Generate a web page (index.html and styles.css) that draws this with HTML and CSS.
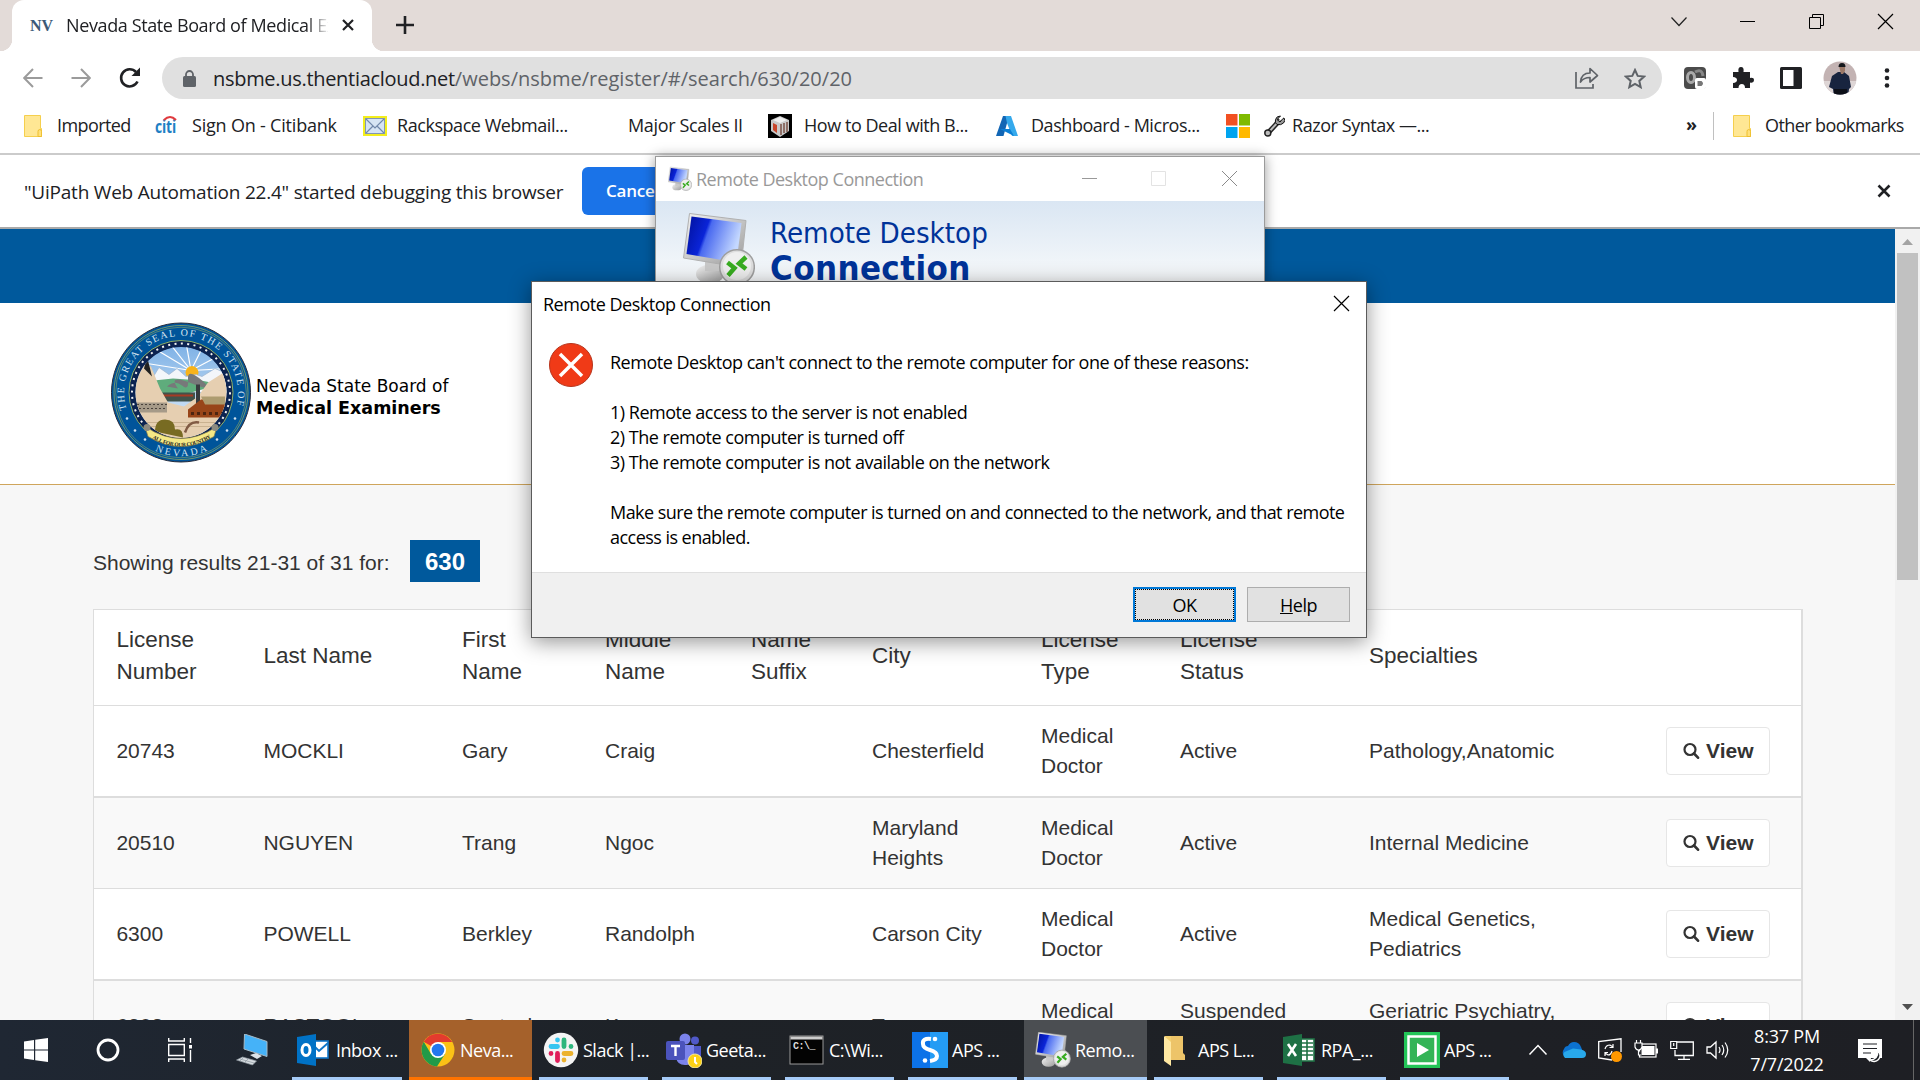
FILE: index.html
```html
<!DOCTYPE html>
<html lang="en">
<head>
<meta charset="utf-8">
<title>Nevada State Board of Medical Examiners</title>
<link rel="stylesheet" href="styles.css">
</head>
<body>
<svg class="defs" width="0" height="0">
  <defs>
    <linearGradient id="screen" x1="0" y1="0" x2="1" y2=".3"><stop offset="0" stop-color="#00109a"/><stop offset=".4" stop-color="#0a24d8"/><stop offset=".46" stop-color="#4a6af0"/><stop offset="1" stop-color="#c4d8ff"/></linearGradient>
    <linearGradient id="metal" x1="0" y1="0" x2="1" y2="1"><stop offset="0" stop-color="#f4f4f4"/><stop offset="1" stop-color="#9a9a9a"/></linearGradient>
    <linearGradient id="sky" x1="0" y1="0" x2="0" y2="1"><stop offset="0" stop-color="#7fb2e6"/><stop offset="1" stop-color="#e8f2fa"/></linearGradient>
  </defs>
  <symbol id="folder" viewBox="0 0 18 22"><path d="M0.5 0.5h16v13h1v8h-17z" fill="#ffe794" stroke="#f5cf4d"/><path d="M14 21.500v-5q0-2 1.800-2t1.800 2v5z" fill="#ffe07a" stroke="#eebf2f"/></symbol>
  <symbol id="rdp" viewBox="0 0 72 73"><ellipse cx="27" cy="61" rx="14" ry="9.500" fill="url(#metal)"/><path d="M22 46h17v12H22z" fill="#c9c9c9"/><path d="M6.500 .5L63 7.500 58 54.500.5 45z" fill="url(#metal)" stroke="#b0b0b0"/><path d="M8.500 3.500l50 6.500-5 39.500L3.500 41z" fill="url(#screen)"/><circle cx="54" cy="54" r="17.300" fill="#dedede" stroke="#9f9f9f" stroke-width="1.500"/><circle cx="54" cy="53" r="14" fill="#efefef"/><path d="M44.500 49.500l7 5.500-6.500 7.500M63 44l-7 6.500 7 5.500" fill="none" stroke="#38ac20" stroke-width="4.500"/></symbol>
  <symbol id="loupe" viewBox="0 0 17 17"><circle cx="7" cy="7.500" r="5.500" fill="none" stroke="#333" stroke-width="2.200"/><path d="M11 11.500l4 4.200" stroke="#333" stroke-width="2.600" stroke-linecap="round"/></symbol>
</svg>

<div class="desktop">
  <section class="browser">
    <header class="tabstrip">
      <div class="tab">
        <span class="nv">NV</span>
        <span class="tab-title">Nevada State Board of Medical Ex</span>
        <svg class="tab-close" width="14" height="14" viewBox="0 0 14 14"><path d="M2 2l10 10M12 2L2 12" stroke="#202124" stroke-width="2.200"/></svg>
      </div>
      <svg class="new-tab" width="20" height="20" viewBox="0 0 20 20"><path d="M10 1v18M1 10h18" stroke="#202124" stroke-width="2.600"/></svg>
      <div class="win-controls">
        <svg width="70" height="42" viewBox="0 0 70 42"><path d="M28.500 17.500l7.500 8 7.500-8" fill="none" stroke="#222" stroke-width="1.200"/></svg>
        <svg width="69" height="42" viewBox="0 0 69 42"><path d="M27 21.500h15" stroke="#000"/></svg>
        <svg width="69" height="42" viewBox="0 0 69 42"><path d="M27.500 17.500h11v11h-11zM30.500 17.500v-3h11v11h-3" fill="none" stroke="#000"/></svg>
        <svg width="69" height="42" viewBox="0 0 69 42"><path d="M27 14l15 15M42 14L27 29" stroke="#000" stroke-width="1.200"/></svg>
      </div>
    </header>

    <div class="toolbar">
      <svg class="nav" width="20" height="20" viewBox="0 0 20 20"><path d="M19.500 10H1.500M10 1L1.200 10l8.800 9" fill="none" stroke="#9b9b9b" stroke-width="2"/></svg>
      <svg class="nav" width="20" height="20" viewBox="0 0 20 20"><path d="M0.500 10h18M10 1l8.800 9-8.800 9" fill="none" stroke="#9b9b9b" stroke-width="2"/></svg>
      <svg class="reload" width="22" height="22" viewBox="0 0 22 22"><path d="M18.500 14.500A8.600 8.600 0 1 1 17 5" fill="none" stroke="#202124" stroke-width="2.600"/><path d="M21 0.500v8.500h-8.500z" fill="#202124"/></svg>
      <div class="omnibox">
        <svg class="lock" width="13" height="17" viewBox="0 0 13 17"><path d="M3 7V4.500a3.500 3.500 0 0 1 7 0V7" fill="none" stroke="#5f6368" stroke-width="1.800"/><rect y="6" width="13" height="11" rx="1.500" fill="#5f6368"/></svg>
        <span class="url"><span class="host">nsbme.us.thentiacloud.net</span><span class="path">/webs/nsbme/register/#/search/630/20/20</span></span>
        <svg class="share" width="24" height="22" viewBox="0 0 24 22"><path d="M1 5v16h17v-4" fill="none" stroke="#5f6368" stroke-width="1.700"/><path d="M5.500 15c.5-6 4-9 9.500-9V1.500L22.500 8.500 15 15v-4.500c-4 0-7 1-9.500 4.500z" fill="none" stroke="#5f6368" stroke-width="1.700" stroke-linejoin="round"/></svg>
        <svg class="star" width="22" height="21" viewBox="0 0 22 21"><path d="M11 2l2.700 5.900 6.400.700-4.800 4.300 1.400 6.300L11 16l-5.700 3.200 1.400-6.300L1.900 8.600l6.400-.700z" fill="none" stroke="#5f6368" stroke-width="2"/></svg>
      </div>
      <div class="extensions">
        <svg width="22" height="22" viewBox="0 0 22 22"><rect width="22" height="22" rx="4" fill="#4b4b4b"/><ellipse cx="7" cy="10.500" rx="3.500" ry="5" fill="none" stroke="#a9a9a9" stroke-width="3"/><path d="M11 5q7-4 8 4" fill="none" stroke="#888" stroke-width="3"/><rect x="11" y="11" width="11" height="11" rx="2" fill="#fff"/><path d="M13.500 14h4q3 2.500 0 5h-4z" fill="#777"/></svg>
        <svg width="22" height="22" viewBox="0 0 22 22"><path d="M1 5h5.500q-.8-5 2.500-5t2.500 5H18v6q4-.7 4 2.300t-4 2.200V21h-5q0-4-3.200-4t-3.300 4H1v-5q4-.3 4-3t-4-3z" fill="#202124"/></svg>
        <svg width="22" height="22" viewBox="0 0 22 22"><rect width="22" height="22" rx="1.500" fill="#202124"/><rect x="3" y="3" width="10.500" height="16" fill="#fff"/></svg>
        <svg class="avatar" width="34" height="34" viewBox="0 0 34 34"><clipPath id="av"><circle cx="17" cy="17" r="16.500"/></clipPath><g clip-path="url(#av)"><path d="M0 0h34v34H0z" fill="#c3b3b3"/><path d="M0 20h34v14H0z" fill="#ded6d6"/><path d="M15 11l-6 4-3 11 4 2 1 8h14l1-8 2-2-2-11-5-4z" fill="#18243f"/><path d="M16 5h6v5l-2 3h-2z" fill="#9b7867"/><path d="M15.500 6q0-4 3.500-4t3.500 4z" fill="#15171c"/><path d="M11 28h13v6H11z" fill="#0c0f18"/></g></svg>
        <svg class="dots" width="6" height="20" viewBox="0 0 6 20"><circle cx="3" cy="2.500" r="2.300"/><circle cx="3" cy="10" r="2.300"/><circle cx="3" cy="17.500" r="2.300"/></svg>
      </div>
    </div>

    <nav class="bookmarks">
      <a class="bm bm-imported"><svg width="18" height="22"><use href="#folder"/></svg><span>Imported</span></a>
      <a class="bm bm-citi"><svg width="25" height="22" viewBox="0 0 25 22"><text x="0" y="18" class="citi" textLength="21" lengthAdjust="spacingAndGlyphs">citi</text><path d="M9 5q6-6 12 0" fill="none" stroke="#e03a3e" stroke-width="2"/></svg><span>Sign On - Citibank</span></a>
      <a class="bm bm-rack"><svg width="24" height="20" viewBox="0 0 24 20"><rect x="1" y="1" width="22" height="18" fill="#d6e4f4" stroke="#f3ee1c" stroke-width="2"/><rect x="2.500" y="2.500" width="19" height="15" fill="none" stroke="#8196b5"/><path d="M3 3l9 9 9-9M3 17l7-7M21 17l-7-7" fill="none" stroke="#7188ab" stroke-width="1.200"/></svg><span>Rackspace Webmail...</span></a>
      <a class="bm bm-major"><span>Major Scales II</span></a>
      <a class="bm bm-how"><svg width="24" height="24" viewBox="0 0 24 24"><path d="M0 0h24v24H0z"/><path d="M12 2l9 4v11l-9 6-9-6V6z" fill="#c9c9c9"/><path d="M5 9l4 2v8l-4-3z" fill="#c8452b"/><path d="M13 10v11M16 9v10M19 8v10" stroke="#7b5147" stroke-width="1.500"/><path d="M5 6l7-3 7 3-7 3z" fill="#eee"/></svg><span>How to Deal with B...</span></a>
      <a class="bm bm-dash"><svg width="22" height="22" viewBox="0 0 22 22"><path d="M7 1h6L7.500 21H0z" fill="#1266b5"/><path d="M9.500 1H15l7 20h-6L11 8z" fill="#35a9ec"/><path d="M4 14h10l4 7z" fill="#0c7fd5"/></svg><span>Dashboard - Micros...</span></a>
      <a class="bm bm-ms"><svg width="24" height="24" viewBox="0 0 24 24"><path d="M0 0h11.500v11.500H0z" fill="#f25022"/><path d="M13 0h11v11.500H13z" fill="#7fba00"/><path d="M0 13h11.500v11H0z" fill="#00a4ef"/><path d="M13 13h11v11H13z" fill="#ffb900"/></svg></a>
      <a class="bm bm-razor"><svg width="21" height="22" viewBox="0 0 21 22"><path d="M4 18L16 5" stroke="#222" stroke-width="5"/><path d="M4 18L16 5" stroke="#bbb" stroke-width="2"/><circle cx="3.800" cy="18" r="3" fill="#bbb" stroke="#222" stroke-width="1.500"/><path d="M19 3.500L16 7l-3-2.500L16.500 1q-4 0-5 3.500t1.500 5q4 1 6.500-1.500T20 3z" fill="#999" stroke="#111"/></svg><span>Razor Syntax —...</span></a>
      <a class="bm bm-more">»</a>
      <a class="bm bm-other"><svg width="18" height="22"><use href="#folder"/></svg><span>Other bookmarks</span></a>
    </nav>

    <div class="infobar">
      <span class="info-text">"UiPath Web Automation 22.4" started debugging this browser</span>
      <button class="cancel">Cancel</button>
      <svg class="info-close" width="14" height="14" viewBox="0 0 14 14"><path d="M1.500 1.500l11 11M12.500 1.500l-11 11" stroke="#202124" stroke-width="2.600"/></svg>
    </div>

    <div class="viewport">
      <main class="page">
        <div class="banner"></div>
        <div class="brand">
          <svg width="140" height="141" viewBox="-70 -70 140 140">
            <defs>
              <path id="arc-top" d="M-54.500 17A57 57 0 1 1 54.500 17"/>
              <path id="arc-bot" d="M-38 51A63 63 0 0 0 38 51"/>
              <path id="arc-motto" d="M-32 43.500A54 54 0 0 0 32 43.500"/>
              <clipPath id="scene"><circle r="45.500"/></clipPath>
            </defs>
            <circle r="69.500" fill="#00549a" stroke="#272b3a"/>
            <circle r="67" fill="none" stroke="#8fa863" stroke-width=".8"/><circle r="65.300" fill="none" stroke="#8fa863" stroke-width=".6"/>
            <circle r="52" fill="#0b2351" stroke="#8fb069" stroke-width="1"/>
            <circle r="49" fill="none" stroke="#f2f2f2" stroke-width="2" stroke-dasharray="2 4.400"/>
            <g clip-path="url(#scene)">
              <circle r="46" fill="url(#sky)"/>
              <path d="M10-22L-30-46M10-22L-12-50M10-22L5-50M10-22L24-50M10-22L44-40M10-22L-40-30M10-22L48-24" stroke="#fff" stroke-width="1.200"/>
              <circle cx="11" cy="-20" r="6.500" fill="#f7b31b"/>
              <path d="M-30-12l8-13 10 7 8-6 9 8 10-2 6 2 13-8 12 5v19h-76z" fill="#f3f6fa" stroke="#9bb3cf" stroke-width=".7"/>
              <path d="M-46-10L-8-14 20-12 40-8-20 8z" fill="#5fac7c"/>
              <path d="M-20 0h34v9h-34z" fill="#41534a"/><path d="M-18 3h30" stroke="#a63b24" stroke-width="2"/>
              <path d="M-14-6q8-7 15-1t6-6 14 1-10 3-14 5z" fill="#77797a"/>
              <path d="M-50-34l20 8 9 22 8 14 16 4 14-10 10-14 22-14v72h-98z" fill="#e6cfb1"/>
              <path d="M-34-36l5 20-8-8z" fill="#222"/>
              <path d="M-44 10h30v10h-30z" fill="#a69a88"/><path d="M-44 12h30M-42 16h28" stroke="#4a423b" stroke-dasharray="2 2"/>
              <path d="M-46 30h90M-40 34h80" stroke="#c2aa88" stroke-width=".8"/>
              <path d="M15-8h4v22h-4z" fill="#363b3e"/>
              <path d="M7 17L20 7h24l2 18H7z" fill="#984519"/><path d="M20 4h24v8H24z" fill="#ad9c70"/><path d="M10 21h34" stroke="#4c2410" stroke-width="3" stroke-dasharray="3 3"/>
              <path d="M-26 39q0-12 10-12t10 10q8-2 8 8z" fill="#786b22"/><path d="M4 40q4-12 14-10" fill="none" stroke="#815b44" stroke-width="2.500"/>
            </g>
            <path d="M-36 34Q0 58 36 34l-3 10Q0 64-33 44z" fill="#f4e885" stroke="#8a8049" stroke-width=".7"/>
            <circle cx="-34" cy="35" r="3.500" fill="#8c8a80"/><circle cx="34" cy="35" r="3.500" fill="#8c8a80"/>
            <text class="seal-text"><textPath href="#arc-top" textLength="208">THE GREAT SEAL OF THE STATE OF</textPath></text>
            <text class="seal-text"><textPath href="#arc-bot" startOffset="14" textLength="54">NEVADA</textPath></text>
            <text class="seal-motto"><textPath href="#arc-motto" startOffset="4" textLength="62">ALL FOR OUR COUNTRY</textPath></text>
            <g fill="#cfe0ee"><circle cx="-54" cy="26" r="1.300"/><circle cx="-46" cy="38" r="1.300"/><circle cx="-36" cy="47" r="1.300"/><circle cx="54" cy="26" r="1.300"/><circle cx="46" cy="38" r="1.300"/><circle cx="36" cy="47" r="1.300"/></g>
          </svg>
          <div class="brand-name"><span>Nevada State Board of</span><b>Medical Examiners</b></div>
        </div>
        <div class="results">
          <div class="summary"><span>Showing results 21-31 of 31 for:</span><b class="badge">630</b></div>
          <div class="table">
            <div class="row head"><span>License Number</span><span>Last Name</span><span>First Name</span><span>Middle Name</span><span>Name Suffix</span><span>City</span><span>License Type</span><span>License Status</span><span>Specialties</span><span></span></div>
            <div class="row odd"><span>20743</span><span>MOCKLI</span><span>Gary</span><span>Craig</span><span></span><span>Chesterfield</span><span>Medical Doctor</span><span>Active</span><span>Pathology,Anatomic</span><span><button class="view"><svg width="17" height="17"><use href="#loupe"/></svg>View</button></span></div>
            <div class="row even"><span>20510</span><span>NGUYEN</span><span>Trang</span><span>Ngoc</span><span></span><span>Maryland Heights</span><span>Medical Doctor</span><span>Active</span><span>Internal Medicine</span><span><button class="view"><svg width="17" height="17"><use href="#loupe"/></svg>View</button></span></div>
            <div class="row odd"><span>6300</span><span>POWELL</span><span>Berkley</span><span>Randolph</span><span></span><span>Carson City</span><span>Medical Doctor</span><span>Active</span><span>Medical Genetics, Pediatrics</span><span><button class="view"><svg width="17" height="17"><use href="#loupe"/></svg>View</button></span></div>
            <div class="row even"><span>6308</span><span>RASTOGI</span><span>Santosh</span><span>Kumar</span><span></span><span>Tampa</span><span>Medical Doctor</span><span>Suspended Active</span><span>Geriatric Psychiatry, Psychiatry</span><span><button class="view"><svg width="17" height="17"><use href="#loupe"/></svg>View</button></span></div>
          </div>
        </div>
      </main>
      <div class="scrollbar">
        <svg width="25" height="24" viewBox="0 0 25 24"><path d="M7 16l5.500-6 5.500 6z" fill="#a3a3a3"/></svg>
        <div class="thumb"></div>
        <svg class="down" width="25" height="24" viewBox="0 0 25 24"><path d="M7 8l5.500 6 5.500-6z" fill="#505050"/></svg>
      </div>
    </div>
  </section>

  <section class="rdc">
    <header class="rdc-title">
      <svg width="24" height="26" viewBox="0 0 24 26"><use href="#rdp" width="24" height="26"/></svg>
      <span>Remote Desktop Connection</span>
      <svg class="rdc-btns" width="160" height="20" viewBox="0 0 160 20"><path d="M0 9.500h15" stroke="#999"/><path d="M69.500 2.500h14v14h-14z" fill="none" stroke="#e3e3e3"/><path d="M140 2l15 15M155 2l-15 15" stroke="#8a8a8a"/></svg>
    </header>
    <div class="rdc-banner">
      <svg width="72" height="73"><use href="#rdp"/></svg>
      <div class="rdc-name"><span>Remote Desktop</span><b>Connection</b></div>
    </div>
  </section>

  <section class="dialog">
    <header class="dlg-title"><span>Remote Desktop Connection</span><svg width="17" height="17" viewBox="0 0 17 17"><path d="M1 1l15 15M16 1L1 16" stroke="#000" stroke-width="1.200"/></svg></header>
    <div class="dlg-body">
      <svg width="44" height="44" viewBox="0 0 44 44"><circle cx="22" cy="22" r="21.500" fill="#f03a17" stroke="#b7351d"/><path d="M11 11l22 22M33 11L11 33" stroke="#fff" stroke-width="3.500"/></svg>
      <div class="dlg-text">
        <p>Remote Desktop can't connect to the remote computer for one of these reasons:</p>
        <p>1) Remote access to the server is not enabled<br>2) The remote computer is turned off<br>3) The remote computer is not available on the network</p>
        <p class="advice">Make sure the remote computer is turned on and connected to the network, and that remote<br>access is enabled.</p>
      </div>
    </div>
    <footer class="dlg-foot"><button class="dlg-btn primary">OK</button><button class="dlg-btn"><u>H</u>elp</button></footer>
  </section>

  <footer class="taskbar">
    <div class="launch">
      <svg width="24" height="24" viewBox="0 0 24 24"><path d="M0 3.400l10-1.400v9.400H0zM11.200 1.800L24 0v11.400H11.200zM0 12.600h10V22L0 20.600zM11.200 12.600H24V24l-12.800-1.800z" fill="#fff"/></svg>
      <svg width="24" height="24" viewBox="0 0 24 24"><circle cx="12" cy="12" r="10" fill="none" stroke="#fff" stroke-width="2.800"/></svg>
      <svg width="24" height="24" viewBox="0 0 24 24"><path d="M.7 0v3h15.600V0M.7 24v-3h15.600v3M.7 6.500h15.600v11H.7zM22.500 0v5M22.500 12v12" fill="none" stroke="#fff" stroke-width="1.400"/><path d="M21 7h3v3.500h-3z" fill="#fff"/></svg>
      <svg width="33" height="32" viewBox="0 0 33 32"><path d="M8.500 0L31 7.500v15L8 15z" fill="#45b2f8" stroke="#a5bac7"/><path d="M14 21l6-2 6 3-5 3z" fill="#dce3e8"/><path d="M.5 26l6-3 14 4-4 4z" fill="#d7dce0" stroke="#8c979f" stroke-width=".7"/><path d="M4 25l14 4M7 24l-3 3M12 25l-3 3" stroke="#8c979f" stroke-width=".7"/></svg>
    </div>
    <div class="tasks">
      <div class="task first"><svg width="36" height="36" viewBox="0 0 36 36"><rect x="14" y="9" width="18" height="17" fill="#fff" stroke="#1076c8" stroke-width="1.600"/><path d="M19 15l4 4 9-8" fill="none" stroke="#1076c8" stroke-width="2"/><path d="M1 5l19-3v32L1 31z" fill="#0072c6"/><ellipse cx="10" cy="18" rx="4" ry="5.500" fill="none" stroke="#fff" stroke-width="3"/></svg><span>Inbox ...</span></div>
      <div class="task attention"><svg width="36" height="36" viewBox="0 0 36 36"><circle cx="18" cy="18" r="16.500" fill="#fbc116"/><path d="M18 18L3.700 9.800A16.500 16.500 0 0 1 32.300 10H18z" fill="#e33b2e"/><path d="M3.700 9.800A16.500 16.500 0 0 0 17 34.500L25 22l-14 0z" fill="#229a48"/><circle cx="18" cy="18" r="8" fill="#fff"/><circle cx="18" cy="18" r="6.300" fill="#2377ed"/></svg><span>Neva...</span></div>
      <div class="task"><svg width="36" height="36" viewBox="0 0 36 36"><circle cx="18" cy="18" r="17.200" fill="#f4f4f4"/><g stroke-width="4.800" stroke-linecap="round" fill="none"><path d="M14.500 8v0M8 14.500h6.500" stroke="#36c5f0"/><path d="M21 8v6.500M28 14.500v0" stroke="#2eb67d"/><path d="M14.500 21.500v7M8 21.500v0" stroke="#e01e5a"/><path d="M21 21.500h7M21 28v0" stroke="#ecb22e"/></g></svg><span>Slack |...</span></div>
      <div class="task"><svg width="36" height="36" viewBox="0 0 36 36"><circle cx="19" cy="7" r="5.500" fill="#7b83eb"/><circle cx="29" cy="8.500" r="4" fill="#5059c9"/><path d="M24 14h11v10q-1 7-8 6z" fill="#5059c9"/><path d="M10 13h18v12q-1 9-9 8-8 0-9-8z" fill="#7b83eb"/><rect x="0" y="9" width="19" height="19" rx="2" fill="#4b53bc"/><path d="M5 14h9M9.500 14v10" stroke="#fff" stroke-width="2.400"/><circle cx="29" cy="29" r="7" fill="#fcd116" stroke="#f3e7a0"/><path d="M29 25v5l2 2" fill="none" stroke="#fff" stroke-width="2"/></svg><span>Geeta...</span></div>
      <div class="task"><svg width="36" height="36" viewBox="0 0 36 36"><rect x="1" y="4" width="33" height="28" fill="#030303" stroke="#999"/><path d="M1.500 4.500h32v3h-32z" fill="#ccc"/><text x="4" y="17" class="cmd">C:\_</text></svg><span>C:\Wi...</span></div>
      <div class="task"><svg width="36" height="36" viewBox="0 0 36 36"><path d="M0 0h36v36H0z" fill="#0c72e8"/><path d="M18 0h18v36H18z" fill="#249cf4"/><path d="M19 7q-9-1-8 5 0 4 7 6t7 6-7 5" fill="none" stroke="#fff" stroke-width="4"/><circle cx="23" cy="7" r="2.300" fill="#fff"/><circle cx="13" cy="28.500" r="2.300" fill="#fff"/></svg><span>APS ...</span></div>
      <div class="task active"><svg width="36" height="36" viewBox="0 0 36 36"><use href="#rdp" width="36" height="36"/></svg><span>Remo...</span></div>
      <div class="task"><svg width="36" height="36" viewBox="0 0 36 36"><path d="M7 4h18v23H7z" fill="#f3cf6e"/><path d="M6 4l7 6v24l-7-5z" fill="#ffe8a2"/><path d="M13 10V4h12v17l2 2v5H13z" fill="#edc469"/></svg><span>APS L...</span></div>
      <div class="task"><svg width="36" height="36" viewBox="0 0 36 36"><rect x="17" y="7" width="16" height="22" fill="#fff" stroke="#207245" stroke-width="1.600"/><path d="M20 11h12M20 15h12M20 19h12M20 23h12M26 8v20" stroke="#207245" stroke-width="1.600"/><path d="M2 5l19-3v32L2 31z" fill="#1e7145"/><path d="M7 12l8 12M15 12L7 24" stroke="#fff" stroke-width="2.600"/></svg><span>RPA_...</span></div>
      <div class="task"><svg width="36" height="36" viewBox="0 0 36 36"><path d="M0 0h36v36H0z" fill="#23c558"/><rect x="4.500" y="4.500" width="27" height="27" fill="#33b457" stroke="#fff" stroke-width="2.500"/><path d="M13 11l12 7-12 7z" fill="#fff"/></svg><span>APS ...</span></div>
    </div>
    <div class="tray">
      <svg width="24" height="24" viewBox="0 0 24 24"><path d="M3.500 16.500l8.500-9 8.500 9" fill="none" stroke="#fff" stroke-width="1.500"/></svg>
      <svg width="24" height="24" viewBox="0 0 24 24"><path d="M3 19a5.500 5.500 0 0 1-1-8Q3 8 6 8 8 4 12 4q5 0 7 5l2 5z" fill="#0c72cf"/><path d="M3 20q-3-3-.5-6L11 10.500l8 1q5 1 5 4.500 0 4-4 4z" fill="#28a8ea"/></svg>
      <svg width="24" height="24" viewBox="0 0 24 24"><path d="M14 22L.7 20V3.500L23 .8V14" fill="none" stroke="#fff" stroke-width="1.300"/><path d="M7 11q1-4 5-4l3 2M15 6v3.500h-3.500M14 13q-1 4-4 4l-3-2M7 18v-3.500h3" fill="none" stroke="#fff" stroke-width="1.200"/><circle cx="18.500" cy="18.500" r="5.500" fill="#ff9800"/></svg>
      <svg width="24" height="24" viewBox="0 0 24 24"><rect x="5.500" y="6" width="16.500" height="13" fill="none" stroke="#fff" stroke-width="1.200"/><path d="M7.500 8H20.500v9H7.500zM22 10.500h2v5h-2z" fill="#fff"/><path d="M1 5h7v4q-1 3-3.500 3T1 9zM2.500 5V2M6.500 5V2M4.500 12v5h3" fill="#1e2126" stroke="#fff" stroke-width="1.200"/></svg>
      <svg width="24" height="24" viewBox="0 0 24 24"><path d="M7 4h16.300v13.500H5V12M14 17.500V21M8 21.300h12" fill="none" stroke="#fff" stroke-width="1.300"/><path d="M.7 3.500h6v7h-6zM3.700 5v3" fill="#1e2126" stroke="#fff" stroke-width="1.200"/></svg>
      <svg width="24" height="24" viewBox="0 0 24 24"><path d="M1 9h3.500L10 4v16l-5.500-5H1z" fill="none" stroke="#fff" stroke-width="1.300"/><path d="M13 9q2 3 0 6M16 7q3.500 5 0 10M19 4.500q5.500 7.500 0 15" fill="none" stroke="#fff" stroke-width="1.200"/></svg>
    </div>
    <div class="clock"><span>8:37 PM</span><span>7/7/2022</span></div>
    <svg class="notes" width="25" height="25" viewBox="0 0 25 25"><path d="M0 0h24v19H13l-1 4-4-4H0z" fill="#fff"/><path d="M5 5h14M5 9.500h14M5 14h8" stroke="#1e2126" stroke-width="1.200"/><path d="M20 12a6 6 0 1 1-8 9q8 0 8-9z" fill="#1e2126" stroke="#fff" stroke-width="1.300"/></svg>
    <div class="peek"></div>
  </footer>
</div>
</body>
</html>
```
FILE: styles.css
```css
* { box-sizing: border-box; }
body { margin: 0; font-family: "Open Sans", "Noto Sans", sans-serif; font-size: 18px; color: #202124; }
.defs { display: block; }
svg { flex: none; }
button { font-family: inherit; }
.desktop { position: relative; width: 1920px; height: 1080px; overflow: hidden; display: flex; flex-direction: column; }
.browser { flex: 1; min-height: 0; display: flex; flex-direction: column; background: #fff; }

/* Tab strip */
.tabstrip { height: 51px; flex: none; display: flex; align-items: flex-start; background: #e3dbd8; }
.tab { position: relative; width: 360px; height: 51px; margin-left: 12px; background: #fff; border-radius: 12px 12px 0 0; display: flex; align-items: center; padding-bottom: 1px; }
.tab::before, .tab::after { content: ""; position: absolute; bottom: 0; width: 12px; height: 12px; }
.tab::before { left: -12px; background: radial-gradient(circle at 0 0, transparent 12px, #fff 12.5px); }
.tab::after { right: -12px; background: radial-gradient(circle at 100% 0, transparent 12px, #fff 12.5px); }
.nv { width: 36px; margin-left: 18px; padding-top: 2px; font: bold 16px "Liberation Serif", serif; color: #3c5a78; }
.tab-title { width: 262px; overflow: hidden; white-space: nowrap; letter-spacing: -.38px; -webkit-mask-image: linear-gradient(90deg, #000 240px, transparent 264px); mask-image: linear-gradient(90deg, #000 240px, transparent 264px); }
.tab-close { margin-left: 13px; }
.new-tab { margin: 15px 0 0 23px; }
.win-controls { margin-left: auto; display: flex; }

/* Toolbar */
.toolbar { height: 54px; flex: none; display: flex; align-items: center; padding-left: 23px; }
.nav { margin-right: 28px; }
.reload { margin-right: 21px; }
.omnibox { width: 1500px; height: 42px; border-radius: 21px; background: #e0e0e0; display: flex; align-items: center; padding-left: 21px; }
.url { margin-left: 17px; flex: 1; font-size: 20px; white-space: nowrap; }
.host { letter-spacing: -.3px; }
.path { color: #5f6368; }
.share { margin-right: 25px; }
.star { margin-right: 16px; }
.extensions { display: flex; align-items: center; gap: 26px; margin-left: 22px; }
.avatar { margin: 0 1px 0 -5px; }
.dots { fill: #202124; }

/* Bookmarks */
.bookmarks { height: 48px; flex: none; display: flex; align-items: center; padding-bottom: 6px; padding-left: 24px; white-space: nowrap; letter-spacing: -.45px; }
.bookmarks span { position: relative; top: -1px; }
.bm { display: flex; align-items: center; flex: none; }
.bm-imported { width: 131px; gap: 15px; letter-spacing: -.6px; }
.bm-citi { width: 208px; gap: 12px; letter-spacing: -.2px; }
.bm-rack { width: 265px; gap: 10px; }
.bm-major { width: 140px; letter-spacing: -.35px; }
.bm-how { width: 228px; gap: 12px; }
.bm-dash { width: 230px; gap: 13px; }
.bm-ms { width: 38px; }
.bm-razor { width: 422px; gap: 7px; }
.bm-more { width: 28px; height: 28px; border-right: 1px solid #c0c0c0; font-weight: bold; padding-bottom: 4px; }
.bm-other { margin-left: 19px; gap: 14px; letter-spacing: -.6px; }
.citi { font: bold 18px "Open Sans", sans-serif; fill: #1f80c4; }

/* Debugging notice */
.infobar { height: 76px; flex: none; border-top: 2px solid #cbcbcb; border-bottom: 2px solid #a9a9a9; display: flex; align-items: center; padding: 0 29px 0 24px; white-space: nowrap; }
.info-text { width: 558px; font-size: 19px; letter-spacing: -.22px; padding-top: 2px; }
.cancel { width: 107px; height: 48px; border: 0; border-radius: 6px; background: #1a73e8; color: #fff; font-size: 17px; font-weight: 600; letter-spacing: -.2px; padding: 0 6px 1px 0; }
.info-close { margin-left: auto; }

/* Page */
.viewport { flex: 1; min-height: 0; display: flex; }
.page { width: 1895px; overflow: hidden; background: #f7f7f7; font-family: "Liberation Sans", Arial, sans-serif; font-size: 21px; color: #333; }
.banner { height: 74px; background: #00599c; }
.brand { height: 182px; background: #fff; border-bottom: 1px solid #cfa55b; display: flex; align-items: center; padding: 0 0 2px 111px; }
.brand-name { display: flex; flex-direction: column; margin: 8px 0 0 5px; font-family: "DejaVu Sans", sans-serif; font-size: 17px; line-height: 22px; color: #000; white-space: nowrap; }
.brand-name b { font-size: 17.5px; }
.seal-text { font: 10px "Liberation Serif", serif; fill: #d4e4f0; }
.seal-motto { font: bold 5.5px "Liberation Serif", serif; fill: #222; }
.results { padding: 55px 0 0 93px; }
.summary { display: flex; align-items: center; height: 42px; margin-bottom: 27px; }
.summary > span { width: 317px; white-space: nowrap; padding-top: 3px; }
.badge { width: 70px; height: 42px; background: #00599c; color: #fff; font-size: 24px; line-height: 43px; text-align: center; }
.table { width: 1710px; border: 1px solid #ddd; border-right-width: 2px; }
.row { display: grid; grid-template-columns: 147px 198px 143px 146px 121px 169px 139px 189px 297px 1fr; align-items: center; line-height: 30px; }
.row > span { padding: 0 20px 1px 23px; }
.row > span:nth-child(-n+2) { padding-left: 22.4px; }
.row.head > span { padding-bottom: 3px; }
.head { height: 96px; border-bottom: 1px solid #ddd; background: #fff; font-size: 22.5px; line-height: 32px; }
.odd { height: 92px; background: #fff; border-bottom: 2px solid #ddd; }
.even { height: 91px; background: #f9f9f9; border-bottom: 1px solid #ddd; }
.view { width: 104px; height: 48px; display: flex; align-items: center; gap: 6px; padding: 0 0 0 16px; border: 1px solid #e6e6e6; border-radius: 4px; background: #fff; color: #333; font-size: 21px; font-weight: bold; }
.scrollbar { width: 25px; display: flex; flex-direction: column; align-items: center; background: #f1f1f1; }
.thumb { width: 21px; height: 327px; background: #c1c1c1; }
.down { margin-top: auto; }

/* Remote Desktop window */
.rdc { position: absolute; left: 655px; top: 156px; width: 610px; height: 130px; border: 1px solid #9b9b9b; background: #fff; box-shadow: 0 1px 12px rgba(0,0,0,.4); display: flex; flex-direction: column; }
.rdc-title { height: 44px; flex: none; display: flex; align-items: center; padding-left: 12px; gap: 4px; color: #999; white-space: nowrap; letter-spacing: -.5px; }
.rdc-btns { margin: 0 22px 0 auto; }
.rdc-banner { flex: 1; min-height: 0; overflow: hidden; display: flex; align-items: flex-start; gap: 15px; padding: 12px 0 0 27px; background: linear-gradient(#dae6f3, #f8fafb); }
.rdc-name { display: flex; flex-direction: column; color: #003399; font-family: "DejaVu Sans Condensed", "DejaVu Sans", sans-serif; font-size: 29.2px; line-height: 36px; padding-top: 2px; white-space: nowrap; }
.rdc-name b { font-size: 34.5px; letter-spacing: .4px; line-height: 34px; }

/* Error dialog */
.dialog { position: absolute; left: 531px; top: 281px; width: 836px; height: 357px; border: 1px solid #5b5b5b; background: #fff; color: #000; box-shadow: 0 4px 20px rgba(0,0,0,.42); display: flex; flex-direction: column; white-space: nowrap; letter-spacing: -.49px; }
.dlg-title { height: 44px; display: flex; align-items: center; justify-content: space-between; padding: 0 16px 2px 11px; }
.dlg-title span { padding-top: 2px; }
.dlg-body { flex: 1; min-height: 0; display: flex; gap: 17px; padding: 16px 0 0 17px; }
.dlg-body svg { margin-top: 1px; }
.dlg-text { padding-top: 8px; line-height: 25px; }
.dlg-text p { margin: 0 0 25px; }
.advice { letter-spacing: -.54px; }
.dlg-foot { height: 65px; background: #f0f0f0; border-top: 1px solid #dfdfdf; display: flex; justify-content: flex-end; gap: 11px; padding: 14px 16px 0 0; }
.dlg-btn { width: 103px; height: 35px; background: #e1e1e1; border: 1px solid #adadad; font-size: 18px; letter-spacing: -.5px; color: #000; padding: 1px 0 0; }
.primary { border: 2px solid #0078d7; outline: 1px dotted #000; outline-offset: -3px; }

/* Taskbar */
.taskbar { height: 60px; flex: none; display: flex; align-items: center; background: linear-gradient(90deg, #1f2733, #1e2227 35%, #1e1f24); color: #fff; position: relative; }
.launch { width: 285px; display: flex; align-items: center; gap: 48px; padding-left: 24px; }
.launch svg:last-child { margin-left: -4px; }
.tasks { display: flex; height: 60px; letter-spacing: -.5px; }
.task { position: relative; width: 123px; height: 60px; display: flex; align-items: center; gap: 4px; padding-left: 11px; white-space: nowrap; }
.task::after { content: ""; position: absolute; left: 7px; right: 7px; bottom: 0; height: 3px; background: #a6cbf7; }
.task.first { width: 124px; }
.cmd { font: bold 10px "Liberation Mono", monospace; fill: #ddd; }
.attention { background: #a5612b; }
.attention::after, .active::after { left: 0; right: 0; }
.attention::after { background: #ff7300; }
.active { background: #4b4e52; }
.tray { display: flex; gap: 12px; margin-left: 10px; }
.clock { width: 86px; margin-left: 14px; display: flex; flex-direction: column; align-items: center; line-height: 28px; letter-spacing: -.2px; }
.notes { margin-left: 28px; margin-top: 2px; }
.peek { width: 1px; height: 60px; margin-left: auto; margin-right: 6px; background: #666; }
```
